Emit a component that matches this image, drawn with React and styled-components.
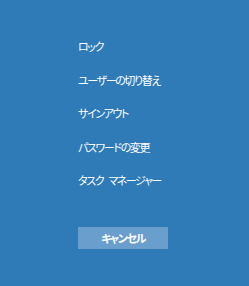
import styled, { createGlobalStyle } from 'styled-components'

const Global = createGlobalStyle`
  html, body {
    margin: 0;
    padding: 0;
    background: #2f7bb7;
  }
`

const Screen = styled.div`
  width: 249px;
  height: 286px;
  box-sizing: border-box;
  background: #2f7bb7;
  padding: 38px 0 0 78px;
  display: flex;
  flex-direction: column;
  font-family: 'Noto Sans CJK JP', 'Noto Sans', sans-serif;
  font-feature-settings: 'palt';
  letter-spacing: -1.4px;
  color: #fff;
`

const Menu = styled.div`
  display: flex;
  flex-direction: column;
  gap: 16.5px;
`

const Item = styled.div`
  font-size: 11px;
  line-height: 17px;
  height: 17px;
  word-spacing: 4px;
  cursor: pointer;
`

const Cancel = styled.button`
  margin-top: 38px;
  width: 90px;
  height: 22px;
  border: none;
  padding: 0;
  background: #6a9ecc;
  color: #fff;
  font-family: inherit;
  font-feature-settings: 'palt';
  letter-spacing: -1.4px;
  font-size: 11px;
  font-weight: 700;
`

const items = ['ロック', 'ユーザーの切り替え', 'サインアウト', 'パスワードの変更', 'タスク マネージャー']

const App = () => (
  <>
    <Global />
    <Screen>
      <Menu>
        {items.map((t) => (
          <Item key={t}>{t}</Item>
        ))}
      </Menu>
      <Cancel>キャンセル</Cancel>
    </Screen>
  </>
)

export default App
